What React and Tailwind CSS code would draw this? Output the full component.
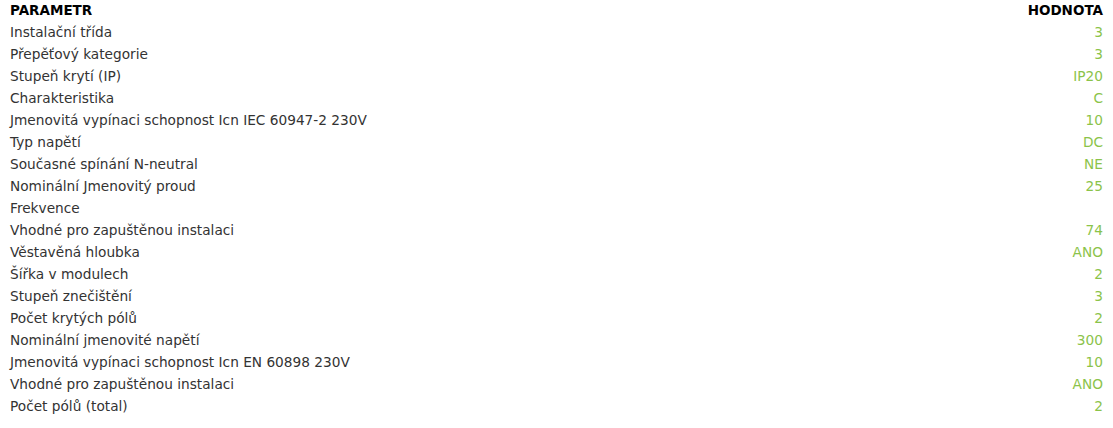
const rows = [
  ["Instalační třída", "3"],
  ["Přepěťový kategorie", "3"],
  ["Stupeň krytí (IP)", "IP20"],
  ["Charakteristika", "C"],
  ["Jmenovitá vypínaci schopnost Icn IEC 60947-2 230V", "10"],
  ["Typ napětí", "DC"],
  ["Současné spínání N-neutral", "NE"],
  ["Nominální Jmenovitý proud", "25"],
  ["Frekvence", ""],
  ["Vhodné pro zapuštěnou instalaci", "74"],
  ["Věstavěná hloubka", "ANO"],
  ["Šířka v modulech", "2"],
  ["Stupeň znečištění", "3"],
  ["Počet krytých pólů", "2"],
  ["Nominální jmenovité napětí", "300"],
  ["Jmenovitá vypínaci schopnost Icn EN 60898 230V", "10"],
  ["Vhodné pro zapuštěnou instalaci", "ANO"],
  ["Počet pólů (total)", "2"],
];

export default function App() {
  return (
    <div className="w-[1113px] h-[428px] bg-white px-[10px] font-['DejaVu_Sans',sans-serif] text-[13.7px] text-[#333]">
      <table className="w-full border-collapse">
        <thead>
          <tr className="h-[21px]">
            <th className="text-left text-[13.5px] font-bold text-black">PARAMETR</th>
            <th className="text-right text-[13.5px] font-bold text-black">HODNOTA</th>
          </tr>
        </thead>
        <tbody>
          {rows.map(([name, value], i) => (
            <tr key={i} className="h-[22px]">
              <td className="text-left">{name}</td>
              <td className="text-right text-[#8bc34a]">{value}</td>
            </tr>
          ))}
        </tbody>
      </table>
    </div>
  );
}
